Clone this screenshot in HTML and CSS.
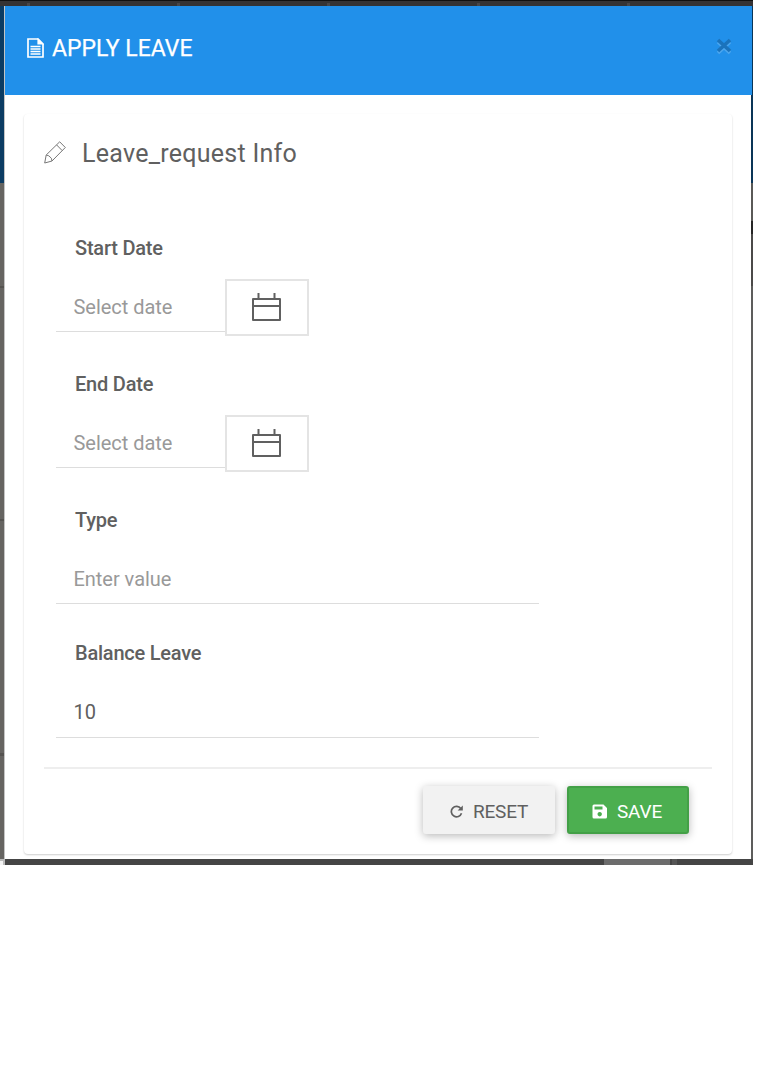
FILE: index.html
```
<!DOCTYPE html>
<html lang="en">
<head>
<meta charset="utf-8">
<title>Apply Leave</title>
<link rel="stylesheet" href="styles.css">
</head>
<body>
<div class="backdrop">
  <div class="topbar"><i></i><i></i><i></i><i></i><i></i></div>
  <div class="page-left"></div>
  <div class="modal">
    <header class="modal-header">
      <svg class="file-icon" width="17" height="20" viewBox="0 0 17 20" fill="none" stroke="#fff">
        <path d="M1 1h10l5 5v13H1z" stroke-width="1.7"/><path d="M11 1v5h5z" fill="#fff" stroke-width="1.2"/>
        <path d="M3.500 8.500h10M3.500 11h10M3.500 13.500h10M3.500 16h10" stroke-width="1.3"/>
      </svg>
      <h1>APPLY LEAVE</h1>
      <button class="close" aria-label="Close">
        <svg width="16" height="17" viewBox="0 0 16 17" fill="none" stroke-width="3.6"><path d="M2 4l12 11M14 4L2 15" stroke="#4ba6ef"/><path d="M2 2l12 11M14 2L2 13" stroke="#1b73bc"/></svg>
      </button>
    </header>
    <div class="modal-body">
      <section class="card">
        <div class="card-title">
          <svg width="22" height="23" viewBox="0 0 22 23" fill="none" stroke="#777" stroke-width="1"><path d="M.7 22l1.500-8L15.700.8l5.600 5.700L8 20z M2.200 14l2.600.8 2.600 2.500L8 20M12.600 3.900l5.600 5.700"/></svg>
          <h2>Leave_request Info</h2>
        </div>
        <form class="form">
          <label>Start Date</label>
          <div class="date-row"><span class="field placeholder">Select date</span><span class="picker"><svg width="29" height="28" viewBox="0 0 29 28" fill="none" stroke="#606060" stroke-width="2" stroke-linejoin="round"><path d="M1 6h27v21H1zM1 13h27M6.500 0v6M22.500 0v6"/></svg></span></div>
          <label>End Date</label>
          <div class="date-row"><span class="field placeholder">Select date</span><span class="picker"><svg width="29" height="28" viewBox="0 0 29 28" fill="none" stroke="#606060" stroke-width="2" stroke-linejoin="round"><path d="M1 6h27v21H1zM1 13h27M6.500 0v6M22.500 0v6"/></svg></span></div>
          <label>Type</label>
          <div class="field wide placeholder">Enter value</div>
          <label class="balance">Balance Leave</label>
          <div class="field wide value">10</div>
        </form>
        <footer class="actions">
          <button class="btn reset"><svg width="13" height="13" viewBox="0 0 13 13"><path d="M10.800 3.600A5.200 5.200 0 1 0 11.500 8.200" fill="none" stroke="#606060" stroke-width="1.7"/><path d="M12.800.4v5.200H7.600z" fill="#606060"/></svg><span>RESET</span></button>
          <button class="btn save"><svg width="15" height="15" viewBox="0 0 15 15"><path fill="#fff" fill-rule="evenodd" d="M2 .5h9.500L15 4v9q0 1.500-1.500 1.500H2Q.5 14.500.5 13V2Q.5.5 2 .5zM2.500 2.500v3h8v-3zM7.700 8a2.200 2.200 0 1 0 .01 0z"/></svg><span>SAVE</span></button>
        </footer>
      </section>
    </div>
  </div>
  <div class="corner"></div>
  <div class="bottombar"></div>
</div>
</body>
</html>
```
FILE: styles.css
```
* { box-sizing: border-box; }
body { margin: 0; background: #fff; font-family: Roboto, sans-serif; color: #606060; }
h1, h2 { margin: 0; }
svg { display: block; flex: none; }
.backdrop { width: 753px; height: 865px; display: grid; grid-template-columns: 5px 748px; grid-template-rows: 6px 853px 6px; }
.topbar { grid-column: 1 / 3; background: #353334; border-top: 1px solid #111; display: flex; gap: 147px; padding: 2px 0 0 27px; }
.topbar i { width: 3px; height: 3px; background: #484647; }
.page-left { border-right: 1px solid #c4c4c4; background: linear-gradient(#0c3c63 0 177px, #666461 177px 280px, #555350 280px 282px, #666461 282px 513px, #555350 513px 515px, #666461 515px 747px, #555350 747px 750px, #666461 750px); }
.modal { display: flex; flex-direction: column; background: linear-gradient(#0a3557 0 177px, #5a5957 177px 215px, #252525 215px 228px, #4b4a49 228px 280px, #5d5d5c 280px); }
.modal-header { width: 747px; height: 89px; background: #2190ea; display: flex; align-items: flex-start; padding: 32px 20px 0 22px; }
.file-icon { margin-right: 8px; }
.modal-header h1 { font-size: 23px; line-height: 26px; font-weight: 400; color: #fff; -webkit-text-stroke: .25px #fff; margin-top: -2px; }
.close { margin: 0 0 0 auto; padding: 0; border: 0; background: none; }
.modal-body { width: 746px; flex: 1; background: #fff; padding: 19px 19px 5px; }
.card { height: 740px; border-radius: 4px; background: #fff; box-shadow: 0 1px 2px rgba(0,0,0,.2); padding: 0 20px; display: flex; flex-direction: column; }
.card-title { display: flex; align-items: flex-start; height: 115px; padding-top: 27px; gap: 16px; }
.card-title h2 { font-weight: 400; font-size: 25px; line-height: 30px; letter-spacing: .27px; margin-top: -2px; }
.form { display: flex; flex-direction: column; height: 538px; padding-left: 12px; }
.form label { height: 50px; padding: 6px 0 0 19px; font-weight: 500; font-size: 20px; line-height: 26px; letter-spacing: -.22px; }
.date-row { display: flex; height: 57px; margin-bottom: 29px; }
.date-row .field { width: 169px; height: 53px; }
.field { border-bottom: 1px solid #ddd; padding: 15px 17.5px 0; font-size: 20px; line-height: 26px; letter-spacing: -.03px; }
.placeholder { color: #999; }
.picker { width: 84px; height: 57px; border: 2px solid #e4e4e4; display: flex; align-items: flex-start; justify-content: center; padding: 12px 1px 0 0; }
.wide { width: 483px; height: 53px; }
.form .balance { margin-top: 30px; }
.value { height: 54px; }
.actions { display: flex; justify-content: flex-end; gap: 12px; padding: 17px 23px 0; border-top: 2px solid #eee; }
.btn { height: 48px; border: 0; border-radius: 3px; display: flex; align-items: center; justify-content: center; font: 400 19px/24px Roboto, sans-serif; letter-spacing: -.2px; padding: 3px 0 0; gap: 10px; box-shadow: 0 2px 9px rgba(0,0,0,.28); }
.reset { width: 132px; background: #f2f2f2; color: #606060; }
.save { width: 122px; background: #4caf50; color: #fff; border: 2px solid #43a047; padding: 3px 2px 0 0; }
.corner { border-top: 2px solid #bbb; border-right: 2px solid #bbb; background: #f4f4f4; }
.bottombar { background: linear-gradient(90deg, #454545 0 599px, #6c6c6c 599px 665px, #454545 665px 667px, #555 667px 672px, #454545 672px); }
```
